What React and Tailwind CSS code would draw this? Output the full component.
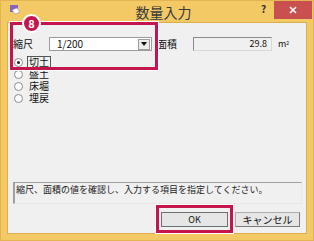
import React from "react";

const jp = { fontFamily: '"Noto Sans CJK JP", "Noto Sans", sans-serif' };

function Radio({ label, checked, focused }) {
  return (
    <div className="flex items-center h-[12px] pl-[6px] text-[10px] leading-[10px]">
      <span className="w-[9px] h-[9px] rounded-full border border-[#8a8a8a] bg-white flex items-center justify-center">
        {checked && <span className="w-[3px] h-[3px] rounded-full bg-[#222]" />}
      </span>
      <span
        className={
          "ml-[4px] px-[1px] block text-[#111] " +
          (focused ? "border border-[#555]" : "border border-transparent")
        }
      >
        {label}
      </span>
    </div>
  );
}

export default function App() {
  return (
    <div
      className="relative w-[314px] h-[241px] bg-[#f3c966] border border-[#e2b552] flex flex-col overflow-hidden"
      style={jp}
    >
      {/* title bar */}
      <div className="h-[21px] flex items-start relative">
        <svg className="ml-[9px] mt-[4px]" width="10" height="10" viewBox="0 0 10 10">
          <rect x="0" y="0" width="8" height="7" fill="#8a64b4" />
          <path d="M2 5 L7 3 L10 7 L5 9 Z" fill="#fff" stroke="#9c8cbc" strokeWidth="0.6" />
        </svg>
        <div className="flex-1 text-center text-[14px] leading-[22px] text-[#3a3a3a] pl-[46px]">
          数量入力
        </div>
        <div className="w-[12px] text-[10px] font-bold text-[#333] leading-[16px] mr-[1px]">?</div>
        <div className="w-[38px] h-[18px] bg-[#c9504f] mr-[1px] flex items-center justify-center">
          <svg width="8" height="8" viewBox="0 0 8 8">
            <path d="M1 1 L7 7 M7 1 L1 7" stroke="#fff" strokeWidth="1.6" />
          </svg>
        </div>
      </div>

      {/* client area */}
      <div className="mx-[6px] mb-[6px] flex-1 bg-[#f0f0f0] border border-[#dcae4e] flex flex-col text-[10px] leading-[12px]">
        <div className="flex items-center mt-[14px] pl-[5px] h-[14px]">
          <span className="w-[36px] text-[#111]">縮尺</span>
          <div className="w-[103px] h-[14px] bg-white border border-[#9c9c9c] flex items-center">
            <span className="flex-1 pl-[7px] text-[#111]">1/200</span>
            <span className="w-[12px] h-[11px] mr-[1px] border border-[#9c9c9c] bg-[#ececec] flex items-center justify-center">
              <svg width="6" height="4" viewBox="0 0 6 4">
                <path d="M0 0 H6 L3 4 Z" fill="#111" />
              </svg>
            </span>
          </div>
          <span className="ml-[5px] w-[36px] text-[#111]">面積</span>
          <div className="w-[79px] h-[14px] bg-[#f0f0f0] border border-[#8a8a8a] border-b-[#d8d8d8] border-r-[#d8d8d8] flex items-center justify-end pr-[4px]">
            <span className="text-[9px] text-[#111]">29.8</span>
          </div>
          <span className="ml-[6px] text-[9px] text-[#111]">
            m<sup className="text-[5px]">2</sup>
          </span>
        </div>

        <div className="mt-[5px] flex flex-col">
          <Radio label="切土" checked focused />
          <Radio label="盛土" />
          <Radio label="床堀" />
          <Radio label="埋戻" />
        </div>

        <div className="mt-[78px] ml-[5px] mr-[4px] h-[22px] border border-[#a0a0a0] border-l-2 border-b-[#e8e8e8] border-r-[#e8e8e8] pl-[1px] pt-[1px] text-[9px] leading-[11px] text-[#222] whitespace-nowrap">
          縮尺、面積の値を確認し、入力する項目を指定してください。
        </div>

        <div className="mt-[8px] flex justify-end gap-[7px] pr-[6px]">
          <button className="w-[67px] h-[15px] border border-[#6e6e6e] bg-[#e6e6e6] text-[9px] leading-[13px] text-[#111]">
            OK
          </button>
          <button className="w-[65px] h-[15px] border border-[#adadad] border-b-[#7a7a7a] border-r-[#7a7a7a] bg-[#e6e6e6] text-[10px] leading-[13px] text-[#111]">
            キャンセル
          </button>
        </div>
      </div>

      {/* annotation overlays */}
      <div className="absolute left-[9px] top-[21px] w-[148px] h-[48px] border-[3px] border-[#c4164c] shadow-[0_0_0_1px_#fff]" />
      <div className="absolute left-[21px] top-[13px] w-[19px] h-[19px] rounded-full bg-[#c4164c] border-2 border-white flex items-center justify-center text-white text-[11px] font-bold leading-none">
        8
      </div>
      <div className="absolute left-[155px] top-[204px] w-[77px] h-[28px] border-[3px] border-[#c4164c] shadow-[0_0_0_1px_#fff]" />
    </div>
  );
}
